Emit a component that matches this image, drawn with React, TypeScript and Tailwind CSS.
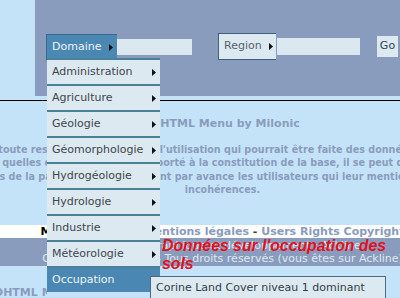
import React from "react";

const menuItems = [
	"Administration",
	"Agriculture",
	"Géologie",
	"Géomorphologie",
	"Hydrogéologie",
	"Hydrologie",
	"Industrie",
	"Météorologie",
	"Occupation",
];

function Arrow() {
	return (
		<svg width="4" height="7" viewBox="0 0 4 7" className="shrink-0">
			<path d="M0 0L4 3.5L0 7Z" fill="#111" />
		</svg>
	);
}

function DropMenu() {
	return (
		<div className="absolute left-[47px] top-[58px] w-[113px]">
			{menuItems.map((item) => {
				const active = item === "Occupation";
				return (
					<div
						key={item}
						className={
							active
								? "flex items-center justify-between h-[26px] border-t-2 border-[#4b8196] bg-[#4a88b3] text-[#eef4f8] pl-[5px] pr-[4px]"
								: "flex items-center justify-between h-[26px] border-t-2 border-[#4b8196] bg-[#dde9f0] text-[#3d464b] pl-[5px] pr-[4px]"
						}
					>
						<span>{item}</span>
						{!active && <Arrow />}
					</div>
				);
			})}
			<div className="h-[8px] bg-[#c5e3f8]" />
		</div>
	);
}

export default function App() {
	return (
		<div className="relative w-[400px] h-[298px] overflow-hidden bg-[#c5e3f8] font-['DejaVu_Sans',sans-serif] text-[11px]">
			{/* header */}
			<div className="flex h-[96px]">
				<div className="w-[35px] bg-[#c5e3f8]" />
				<div className="flex-1 bg-[#8a9cbd] pt-[33px] pl-[11px]">
					<div className="flex items-center h-[27px]">
						<div className="flex items-center justify-between w-[71px] h-[26px] bg-[#4a88b3] border-t border-l border-[#3a6a8c] pl-[5px] pr-[4px] text-[#eaf2f7]">
							<span>Domaine</span>
							<Arrow />
						</div>
						<div className="w-[75px] h-[16px] bg-[#dce8ef]" />
						<div className="ml-[26px] flex items-center justify-between w-[58px] h-[27px] bg-[#dde9f0] border-t border-l border-b border-[#41617a] pl-[5px] pr-[3px] text-[#56636c]">
							<span>Region</span>
							<Arrow />
						</div>
						<div className="ml-[1px] w-[83px] h-[17px] bg-[#dce8ef]" />
						<div className="ml-[17px] flex items-center justify-center w-[21px] h-[21px] bg-[#dde9f0] text-[#2f4656]">
							Go
						</div>
					</div>
				</div>
			</div>
			<div className="h-[4px]" />
			<div className="h-px bg-black" />

			{/* content */}
			<div className="w-[900px] ml-[-227.5px] text-center text-[#8a9cbd] font-bold whitespace-nowrap">
				<div className="pt-[16px] pl-[6px] text-[11px] leading-[14px]">DHTML Menu by Milonic</div>
				<div className="mt-[12px] text-[9.6px] leading-[13.3px]">
					<div>toute responsabilité, quant à l'utilisation qui pourrait être faite des données, ainsi</div>
					<div>quelles et malgré un soin apporté à la constitution de la base, il se peut que des,</div>
					<div>erreurs de la part. Mais ils remercient par avance les utilisateurs qui leur mentionneraient des</div>
					<div>incohérences.</div>
				</div>
			</div>

			<div className="mt-[29px] h-[13px] bg-white flex justify-center w-[900px] ml-[-227.5px] text-[11px] leading-[13px] font-bold whitespace-nowrap">
				<span className="text-black">Mode d'emploi</span>
				<span className="text-[#3a3f44] whitespace-pre"> - </span>
				<span className="text-[#8a9cbd]">Mentions légales</span>
				<span className="text-[#3a3f44] whitespace-pre"> - </span>
				<span className="text-[#8a9cbd]">Users Rights Copyright</span>
			</div>
			<div className="h-[28px] pt-[1px] bg-[#8a9cbd] w-[900px] ml-[-227.5px] text-center text-[#dce8f0] text-[11px] leading-[13px] whitespace-nowrap">
				<div>Conception graphique et développement : Ackline</div>
				<div>Copyright © Ackline - Tous droits réservés (vous êtes sur Ackline)</div>
			</div>
			<div className="mt-[20px] ml-[-6px] text-[#8a9cbd] font-bold text-[11px] leading-[14px] whitespace-nowrap">
				DHTML Menu by Milonic
			</div>

			{/* overlays */}
			<DropMenu />
			<div className="absolute left-[162px] top-[237px] w-[230px] font-['Liberation_Sans',sans-serif] font-bold italic text-[15.8px] leading-[18px] text-[#e3101c]">
				Données sur l'occupation des sols
			</div>
			<div className="absolute left-[150px] top-[276px] w-[236px] h-[30px] bg-[#dde9f0] border border-[#4f6a7c] pl-[5px] pt-[4px] leading-[14px] text-[#333d44]">
				Corine Land Cover niveau 1 dominant
			</div>
		</div>
	);
}
